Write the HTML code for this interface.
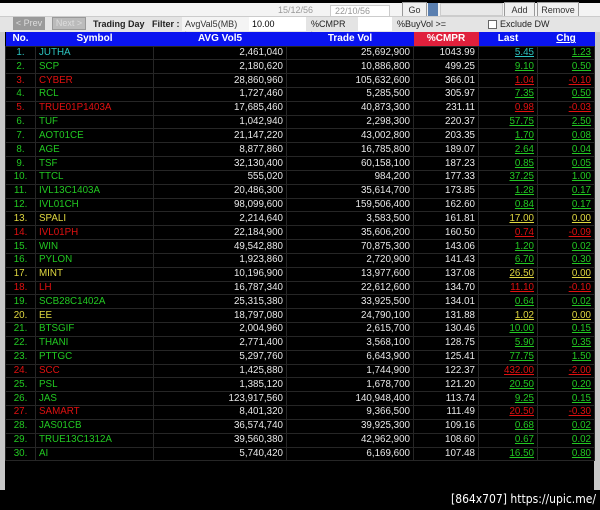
<!DOCTYPE html>
<html><head><style>
*{margin:0;padding:0;box-sizing:border-box}
body{width:600px;height:510px;background:#000;font-family:"Liberation Sans",sans-serif;overflow:hidden;position:relative}
.abs{position:absolute}
.tb{font-size:9px;color:#222}
.btn{position:absolute;border:1px solid #999;background:#f0f0f0;font-size:9px;text-align:center;line-height:14px;color:#333}
table{position:absolute;left:5px;top:32px;width:589px;border-collapse:collapse;table-layout:fixed;font-size:9.8px}
th{background:#0a14f0;color:#fff;font-weight:bold;height:14px;font-size:10px}
td{height:13.83px;border:1px solid #262626;padding:0 3px;white-space:nowrap;line-height:12px;color:#e8e8e8}
td:first-child{text-align:center;padding:0}
td.r{text-align:right}
td.u{text-decoration:underline;text-align:right}
.g{color:#22c822!important}.c{color:#2cc4c0!important}.d{color:#e01010!important}.y{color:#e0d840!important}
</style></head><body>
<div class="abs" style="left:0;top:3px;width:600px;height:14px;background:#f4f4f4"></div>
<div class="abs tb" style="left:278px;top:5px;color:#999">15/12/56</div>
<div class="abs tb" style="left:330px;top:5px;width:60px;height:12px;background:#fff;border:1px solid #ccc;color:#999;padding-left:4px">22/10/56</div>
<div class="btn" style="left:402px;top:2px;width:25px;height:15px">Go</div>
<div class="abs" style="left:428px;top:3px;width:10px;height:13px;background:#5a7fb0"></div>
<div class="abs" style="left:440px;top:3px;width:63px;height:13px;background:#e8e8e8;border:1px solid #ccc"></div>
<div class="btn" style="left:504px;top:2px;width:31px;height:15px">Add</div>
<div class="btn" style="left:537px;top:2px;width:42px;height:15px">Remove</div>
<div class="abs" style="left:0;top:16px;width:600px;height:16px;background:#e4e4e4;border-top:1px solid #ccc"></div>
<div class="btn" style="left:13px;top:17px;width:32px;height:13px;background:#9a9a9a;color:#ddd;line-height:11px">&lt; Prev</div>
<div class="btn" style="left:52px;top:17px;width:34px;height:13px;background:#bbb;color:#ddd;line-height:11px">Next &gt;</div>
<div class="abs tb" style="left:93px;top:19px;font-weight:bold">Trading Day</div>
<div class="abs tb" style="left:152px;top:19px;font-weight:bold">Filter :</div>
<div class="abs tb" style="left:182px;top:17px;width:67px;height:14px;background:#f4f4f4;padding:2px 3px;color:#333">AvgVal5(MB) &gt;=</div>
<div class="abs tb" style="left:249px;top:17px;width:57px;height:14px;background:#fff;padding:2px 3px;color:#000">10.00</div>
<div class="abs tb" style="left:308px;top:17px;width:50px;height:14px;padding:2px 3px">%CMPR &gt;=</div>
<div class="abs" style="left:358px;top:17px;width:34px;height:14px;background:#fff"></div>
<div class="abs tb" style="left:397px;top:19px">%BuyVol &gt;=</div>
<div class="abs" style="left:488px;top:20px;width:9px;height:9px;background:#fff;border:1px solid #666"></div>
<div class="abs tb" style="left:500px;top:19px">Exclude DW</div>
<div class="abs" style="left:0;top:32px;width:5px;height:458px;background:#c8c8c8"></div>
<div class="abs" style="left:594px;top:32px;width:6px;height:458px;background:#c8c8c8"></div>
<table>
<colgroup><col style="width:30px"><col style="width:118px"><col style="width:133px"><col style="width:127px"><col style="width:65px"><col style="width:59px"><col style="width:57px"></colgroup>
<tr><th>No.</th><th>Symbol</th><th>AVG Vol5</th><th>Trade Vol</th><th style="background:#e0203c">%CMPR</th><th>Last</th><th style="text-decoration:underline">Chg</th></tr>
<tr><td class="c">1.</td><td class="c">JUTHA</td><td class="r">2,461,040</td><td class="r">25,692,900</td><td class="r">1043.99</td><td class="u c">5.45</td><td class="u g">1.23</td></tr>
<tr><td class="g">2.</td><td class="g">SCP</td><td class="r">2,180,620</td><td class="r">10,886,800</td><td class="r">499.25</td><td class="u g">9.10</td><td class="u g">0.50</td></tr>
<tr><td class="d">3.</td><td class="d">CYBER</td><td class="r">28,860,960</td><td class="r">105,632,600</td><td class="r">366.01</td><td class="u d">1.04</td><td class="u d">-0.10</td></tr>
<tr><td class="g">4.</td><td class="g">RCL</td><td class="r">1,727,460</td><td class="r">5,285,500</td><td class="r">305.97</td><td class="u g">7.35</td><td class="u g">0.50</td></tr>
<tr><td class="d">5.</td><td class="d">TRUE01P1403A</td><td class="r">17,685,460</td><td class="r">40,873,300</td><td class="r">231.11</td><td class="u d">0.98</td><td class="u d">-0.03</td></tr>
<tr><td class="g">6.</td><td class="g">TUF</td><td class="r">1,042,940</td><td class="r">2,298,300</td><td class="r">220.37</td><td class="u g">57.75</td><td class="u g">2.50</td></tr>
<tr><td class="g">7.</td><td class="g">AOT01CE</td><td class="r">21,147,220</td><td class="r">43,002,800</td><td class="r">203.35</td><td class="u g">1.70</td><td class="u g">0.08</td></tr>
<tr><td class="g">8.</td><td class="g">AGE</td><td class="r">8,877,860</td><td class="r">16,785,800</td><td class="r">189.07</td><td class="u g">2.64</td><td class="u g">0.04</td></tr>
<tr><td class="g">9.</td><td class="g">TSF</td><td class="r">32,130,400</td><td class="r">60,158,100</td><td class="r">187.23</td><td class="u g">0.85</td><td class="u g">0.05</td></tr>
<tr><td class="g">10.</td><td class="g">TTCL</td><td class="r">555,020</td><td class="r">984,200</td><td class="r">177.33</td><td class="u g">37.25</td><td class="u g">1.00</td></tr>
<tr><td class="g">11.</td><td class="g">IVL13C1403A</td><td class="r">20,486,300</td><td class="r">35,614,700</td><td class="r">173.85</td><td class="u g">1.28</td><td class="u g">0.17</td></tr>
<tr><td class="g">12.</td><td class="g">IVL01CH</td><td class="r">98,099,600</td><td class="r">159,506,400</td><td class="r">162.60</td><td class="u g">0.84</td><td class="u g">0.17</td></tr>
<tr><td class="y">13.</td><td class="y">SPALI</td><td class="r">2,214,640</td><td class="r">3,583,500</td><td class="r">161.81</td><td class="u y">17.00</td><td class="u y">0.00</td></tr>
<tr><td class="d">14.</td><td class="d">IVL01PH</td><td class="r">22,184,900</td><td class="r">35,606,200</td><td class="r">160.50</td><td class="u d">0.74</td><td class="u d">-0.09</td></tr>
<tr><td class="g">15.</td><td class="g">WIN</td><td class="r">49,542,880</td><td class="r">70,875,300</td><td class="r">143.06</td><td class="u g">1.20</td><td class="u g">0.02</td></tr>
<tr><td class="g">16.</td><td class="g">PYLON</td><td class="r">1,923,860</td><td class="r">2,720,900</td><td class="r">141.43</td><td class="u g">6.70</td><td class="u g">0.30</td></tr>
<tr><td class="y">17.</td><td class="y">MINT</td><td class="r">10,196,900</td><td class="r">13,977,600</td><td class="r">137.08</td><td class="u y">26.50</td><td class="u y">0.00</td></tr>
<tr><td class="d">18.</td><td class="d">LH</td><td class="r">16,787,340</td><td class="r">22,612,600</td><td class="r">134.70</td><td class="u d">11.10</td><td class="u d">-0.10</td></tr>
<tr><td class="g">19.</td><td class="g">SCB28C1402A</td><td class="r">25,315,380</td><td class="r">33,925,500</td><td class="r">134.01</td><td class="u g">0.64</td><td class="u g">0.02</td></tr>
<tr><td class="y">20.</td><td class="y">EE</td><td class="r">18,797,080</td><td class="r">24,790,100</td><td class="r">131.88</td><td class="u y">1.02</td><td class="u y">0.00</td></tr>
<tr><td class="g">21.</td><td class="g">BTSGIF</td><td class="r">2,004,960</td><td class="r">2,615,700</td><td class="r">130.46</td><td class="u g">10.00</td><td class="u g">0.15</td></tr>
<tr><td class="g">22.</td><td class="g">THANI</td><td class="r">2,771,400</td><td class="r">3,568,100</td><td class="r">128.75</td><td class="u g">5.90</td><td class="u g">0.35</td></tr>
<tr><td class="g">23.</td><td class="g">PTTGC</td><td class="r">5,297,760</td><td class="r">6,643,900</td><td class="r">125.41</td><td class="u g">77.75</td><td class="u g">1.50</td></tr>
<tr><td class="d">24.</td><td class="d">SCC</td><td class="r">1,425,880</td><td class="r">1,744,900</td><td class="r">122.37</td><td class="u d">432.00</td><td class="u d">-2.00</td></tr>
<tr><td class="g">25.</td><td class="g">PSL</td><td class="r">1,385,120</td><td class="r">1,678,700</td><td class="r">121.20</td><td class="u g">20.50</td><td class="u g">0.20</td></tr>
<tr><td class="g">26.</td><td class="g">JAS</td><td class="r">123,917,560</td><td class="r">140,948,400</td><td class="r">113.74</td><td class="u g">9.25</td><td class="u g">0.15</td></tr>
<tr><td class="d">27.</td><td class="d">SAMART</td><td class="r">8,401,320</td><td class="r">9,366,500</td><td class="r">111.49</td><td class="u d">20.50</td><td class="u d">-0.30</td></tr>
<tr><td class="g">28.</td><td class="g">JAS01CB</td><td class="r">36,574,740</td><td class="r">39,925,300</td><td class="r">109.16</td><td class="u g">0.68</td><td class="u g">0.02</td></tr>
<tr><td class="g">29.</td><td class="g">TRUE13C1312A</td><td class="r">39,560,380</td><td class="r">42,962,900</td><td class="r">108.60</td><td class="u g">0.67</td><td class="u g">0.02</td></tr>
<tr><td class="g">30.</td><td class="g">AI</td><td class="r">5,740,420</td><td class="r">6,169,600</td><td class="r">107.48</td><td class="u g">16.50</td><td class="u g">0.80</td></tr>
</table>
<div class="abs" style="left:0;top:490px;width:600px;height:20px;background:#000"></div>
<div class="abs" style="right:4px;top:492px;color:#fff;font-size:12px;font-family:'DejaVu Sans Condensed','DejaVu Sans',sans-serif">[864x707] https://upic.me/</div>
</body></html>
